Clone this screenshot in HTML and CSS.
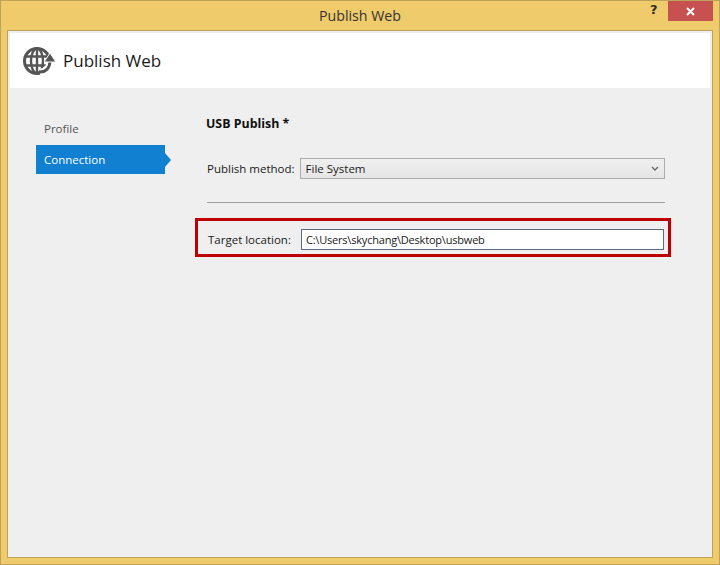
FILE: index.html
```html
<!DOCTYPE html>
<html lang="en">
<head>
<meta charset="utf-8">
<title>Publish Web</title>
<link rel="stylesheet" href="styles.css">
</head>
<body>
<div class="window">
  <div class="titlebar">
    <div class="title">Publish Web</div>
    <div class="help">?</div>
    <div class="close">
      <svg width="9" height="9" viewBox="0 0 9 9"><path d="M1 1L8 8M8 1L1 8" stroke="#fff" stroke-width="2" fill="none"/></svg>
    </div>
  </div>
  <div class="client">
    <header class="header">
      <svg class="logo" width="32" height="30" viewBox="0 0 32 30">
        <g fill="none" stroke="#555">
          <circle cx="14" cy="15" r="12.500" stroke-width="3"/>
          <ellipse cx="14" cy="15" rx="6" ry="12.500" stroke-width="2.400"/>
          <path d="M14 2V28M2 10.500H26M2 19.500H26" stroke-width="2.400"/>
          <path d="M17 26C23 26 27 22 27 14" stroke="#fff" stroke-width="7"/>
          <path d="M17 26C23 26 27 22 27 14" stroke-width="3"/>
        </g>
        <path d="M27 7L33 16H21Z" fill="#555" stroke="#fff" stroke-width="1"/>
      </svg>
      <h1 class="header-title">Publish Web</h1>
    </header>
    <div class="body">
      <nav class="sidebar">
        <div class="nav-item">Profile</div>
        <div class="nav-item active">Connection</div>
      </nav>
      <main class="main">
        <h2 class="heading">USB Publish *</h2>
        <div class="row method">
          <span class="label">Publish method:</span>
          <div class="select">
            <span>File System</span>
            <svg width="8" height="6" viewBox="0 0 8 6"><path d="M1 1L4 4L7 1" stroke="#666" stroke-width="1.300" fill="none"/></svg>
          </div>
        </div>
        <hr class="divider">
        <div class="highlight">
          <span class="label">Target location:</span>
          <div class="input">C:\Users\skychang\Desktop\usbweb</div>
        </div>
      </main>
    </div>
  </div>
</div>
</body>
</html>
```
FILE: styles.css
```css
* { box-sizing: border-box; }
html, body { margin: 0; padding: 0; }
body {
  width: 720px;
  height: 565px;
  overflow: hidden;
  font-family: "Open Sans", "Noto Sans", sans-serif;
  color: #1a1a1a;
}
.window {
  width: 720px;
  height: 565px;
  display: flex;
  flex-direction: column;
  background: #efcb6c;
  border: 1px solid #bda35a;
  padding: 0 6px 6px 6px;
}
.titlebar {
  height: 29px;
  flex: none;
  display: flex;
  align-items: flex-start;
  position: relative;
}
.title {
  position: absolute;
  left: 0;
  right: 0;
  top: 5px;
  text-align: center;
  font-size: 14.200px;
  line-height: 19px;
  color: #333;
}
.help {
  position: absolute;
  left: 643px;
  top: 0;
  font-family: "DejaVu Sans", sans-serif;
  font-weight: 700;
  font-size: 13px;
  line-height: 18px;
  color: #2b2b2b;
}
.close {
  position: absolute;
  left: 661px;
  top: 0;
  width: 45px;
  height: 20px;
  background: #c75050;
  display: flex;
  align-items: center;
  justify-content: center;
}
.client {
  flex: 1;
  display: flex;
  flex-direction: column;
  background: #efefef;
  border: 1px solid #bda35a;
  padding: 2px 2px 0;
  min-height: 0;
}
.header {
  height: 55px;
  flex: none;
  background: #fff;
  display: flex;
  align-items: center;
  padding-left: 13px;
  gap: 8px;
}
.logo { flex: none; }
.header-title {
  margin: 0;
  font-size: 17px;
  line-height: 24px;
  font-weight: 400;
  color: #1a1a1a;
}
.body {
  flex: 1;
  display: flex;
  padding-top: 26px;
}
.sidebar {
  width: 159px;
  margin-left: 26px;
  flex: none;
  display: flex;
  flex-direction: column;
  gap: 1px;
}
.nav-item {
  height: 30px;
  width: 129px;
  padding-left: 8px;
  font-size: 11.500px;
  line-height: 30px;
  color: #555;
}
.nav-item.active {
  position: relative;
  background: #1280d0;
  color: #fff;
  height: 29px;
  line-height: 29px;
}
.nav-item.active::after {
  content: "";
  position: absolute;
  left: 129px;
  top: 8px;
  border-left: 6px solid #1280d0;
  border-top: 7px solid transparent;
  border-bottom: 7px solid transparent;
}
.main {
  flex: 1;
  min-width: 0;
  padding-left: 10px;
}
.heading {
  margin: 0 0 0 1px;
  font-size: 12.400px;
  line-height: 20px;
  font-weight: 700;
  color: #111;
}
.row {
  display: flex;
  align-items: center;
}
.method {
  margin: 24px 0 0 2px;
  gap: 5px;
}
.label {
  font-size: 11.500px;
  line-height: 16px;
  color: #1a1a1a;
  white-space: nowrap;
}
.select {
  width: 365px;
  height: 21px;
  border: 1px solid #acacac;
  background: linear-gradient(#f0f0f0, #e5e5e5);
  display: flex;
  align-items: center;
  justify-content: space-between;
  padding: 0 5px;
  font-size: 11.500px;
  color: #1a1a1a;
}
.divider {
  margin: 23px 0 0 2px;
  width: 458px;
  height: 1px;
  border: 0;
  background: #a0a0a0;
}
.highlight {
  margin: 15px 0 0 -10px;
  width: 476px;
  height: 39px;
  border: 3px solid #bf0000;
  display: flex;
  align-items: center;
  padding: 4px 0 0 10px;
  gap: 10px;
}
.input {
  width: 363px;
  height: 21px;
  border: 1px solid #5f6b7d;
  background: #fff;
  font-size: 11px;
  letter-spacing: -0.2px;
  line-height: 19px;
  padding-left: 4px;
  color: #1a1a1a;
  white-space: nowrap;
}
```
